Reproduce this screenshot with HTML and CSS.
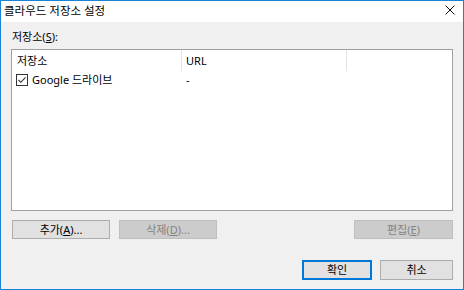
FILE: index.html
```html
<!DOCTYPE html>
<html lang="ko">
<head>
<meta charset="utf-8">
<link rel="stylesheet" href="styles.css">
</head>
<body>
<div class="window">
  <div class="titlebar">
    <span class="title">클라우드 저장소 설정</span>
    <svg class="close" width="10" height="10" viewBox="0 0 10 10"><path d="M0.5 0.5 L9.5 9.5 M9.5 0.5 L0.5 9.5" stroke="#111" stroke-width="1" fill="none"/></svg>
  </div>
  <div class="content">
    <div class="label">저장소(<u>S</u>):</div>
    <div class="list">
      <div class="list-head">
        <div class="col col1">저장소</div>
        <div class="col col2">URL</div>
        <div class="col col3"></div>
      </div>
      <div class="list-row">
        <div class="cell cell1">
          <svg class="check" width="12" height="12" viewBox="0 0 12 12"><rect x="0.5" y="0.5" width="11" height="11" fill="#fff" stroke="#333"/><path d="M2.5 6 L4.8 8.3 L9.5 3.3" stroke="#333" stroke-width="1.1" fill="none"/></svg>
          <span>Google 드라이브</span>
        </div>
        <div class="cell cell2">-</div>
      </div>
    </div>
    <div class="btn-row">
      <button class="btn w98">추가(<u>A</u>)...</button>
      <button class="btn w98 disabled">삭제(<u>D</u>)...</button>
      <span class="spacer"></span>
      <button class="btn w99 disabled">편집(<u>E</u>)</button>
    </div>
    <div class="foot-row">
      <button class="btn ok">확인</button>
      <button class="btn cancel">취소</button>
    </div>
  </div>
</div>
</body>
</html>
```
FILE: styles.css
```css
* { box-sizing: border-box; }
html, body { margin: 0; padding: 0; }
body {
  width: 464px;
  height: 290px;
  font-family: "Noto Sans", "Noto Sans CJK KR", sans-serif;
  font-size: 11px;
  color: #000;
}
.window {
  width: 464px;
  height: 290px;
  border: 1px solid #1883d7;
  display: flex;
  flex-direction: column;
  background: #f0f0f0;
}
.titlebar {
  height: 21px;
  background: #fff;
  display: flex;
  align-items: center;
  justify-content: space-between;
  padding: 0 8px 1px 3px;
}
.title { font-size: 11.5px; line-height: 16px; }
.close { display: block; margin-top: -3px; }
.content {
  flex: 1;
  padding: 7px 10px 0 10px;
  display: flex;
  flex-direction: column;
}
.label { line-height: 16px; height: 16px; padding-left: 1px; margin-bottom: 4px; }
u { text-decoration: underline; text-underline-offset: 1px; }
.list {
  height: 162px;
  border: 1px solid #a0a0a0;
  background: #fff;
}
.list-head { display: flex; height: 21px; }
.col { line-height: 21px; padding-left: 5px; border-right: 1px solid #e5e5e5; }
.col1 { width: 170px; }
.col2 { width: 165px; padding-left: 4px; }
.col3 { width: 0; border: none; }
.list-row { display: flex; height: 18px; align-items: center; }
.cell { line-height: 18px; }
.cell1 { width: 170px; display: flex; align-items: center; padding-left: 4px; gap: 4px; }
.check { display: block; }
.cell2 { padding-left: 4px; }
.btn-row { display: flex; margin-top: 9px; padding-left: 1px; gap: 9px; }
.spacer { flex: 1; }
.btn {
  height: 19px;
  border: 1px solid #adadad;
  background: #e1e1e1;
  font: inherit;
  color: #000;
  padding: 0;
  line-height: 17px;
  margin: 0;
}
.w98 { width: 98px; }
.w99 { width: 99px; }
.btn.disabled { background: #cccccc; border-color: #bfbfbf; color: #838383; }
.foot-row { display: flex; justify-content: flex-end; gap: 8px; margin-top: 21px; }
.foot-row .btn { height: 20px; line-height: 16px; }
.ok { width: 70px; border: 2px solid #0078d7; }
.cancel { width: 73px; }
```
